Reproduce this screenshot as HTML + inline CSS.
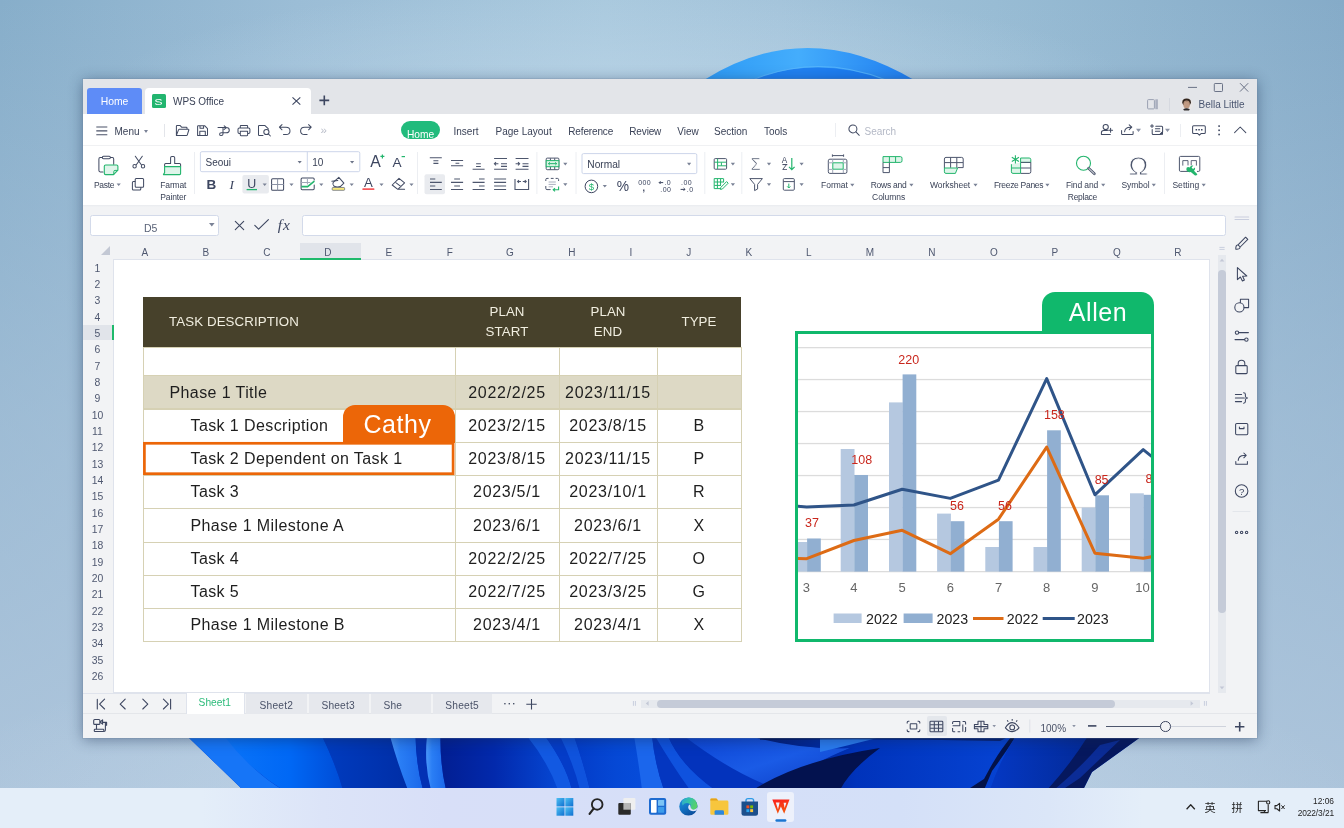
<!DOCTYPE html>
<html>
<head>
<meta charset="utf-8">
<title>WPS Office</title>
<style>
*{box-sizing:border-box;margin:0;padding:0}
html,body{width:1344px;height:828px;overflow:hidden}
body{position:relative;font-family:"Liberation Sans","Noto Sans CJK SC",sans-serif;color:#3c4459;
background:
 radial-gradient(ellipse 720px 170px at 640px 800px,rgba(208,224,240,.6) 0%,rgba(208,224,240,0) 100%),
 radial-gradient(ellipse 520px 110px at 620px 95px,rgba(188,214,232,.7) 0%,rgba(188,214,232,0) 100%),
 linear-gradient(180deg,rgba(178,200,222,0) 0%,rgba(178,200,222,.52) 50%,rgba(178,200,222,.86) 95%,rgba(178,200,222,.9) 100%),
 linear-gradient(90deg,#87aeca 0%,#9bbdd6 22%,#a8c8dd 45%,#a3c3da 58%,#98bcd4 74%,#85abc8 100%);}
.abs,.a{position:absolute}
svg{position:absolute;overflow:visible}
#bg{left:0;top:0}
#taskbar{position:absolute;left:0;top:788px;width:1344px;height:40px;background:linear-gradient(90deg,#e4eef9 0%,#e4eef9 15%,#dce4f8 24%,#d8dff8 33%,#d6dff8 50%,#d4e0f8 67%,#dbe6f8 78%,#e4eef9 85%,#e4eef9 100%);}
#win{position:absolute;left:83px;top:79px;width:1174px;height:659px;background:#fff;box-shadow:0 0 0 1px rgba(110,130,160,.22),0 2px 13px rgba(20,40,75,.45);overflow:hidden}
#titlebar{position:absolute;left:83px;top:79px;width:1174px;height:35px;background:#e3e5e9}
#menubar{position:absolute;left:83px;top:114px;width:1174px;height:31px;background:#fff}
#ribbon{position:absolute;left:83px;top:145px;width:1174px;height:60px;background:#fff;border-top:1px solid #f0f1f3}
#fbar{position:absolute;left:83px;top:205px;width:1174px;height:533px;background:#f2f3f5}
#sheet{position:absolute;left:113px;top:259px;width:1097px;height:434px;background:#fff;border:1px solid #dfe3ec}
#status{position:absolute;left:83px;top:713px;width:1174px;height:25px;border-top:1px solid #e4e6ea}
.t{position:absolute;white-space:nowrap;line-height:1}
/* table (page coords inside #pg) */
#pg{position:absolute;left:-83px;top:-79px;width:1344px;height:828px;will-change:transform}
.cell{position:absolute;border:1px solid #d6d1b4;background:#fff}
.tx{position:absolute;white-space:nowrap;font-size:16px;letter-spacing:.4px;color:#1e1e1e;line-height:20px;height:20px}
.ctr{text-align:center}
.hd{color:#f1eee0;font-size:13.3px;letter-spacing:.1px;line-height:20px}
.colh{position:absolute;top:245px;height:16px;line-height:16px;font-size:10px;color:#4f5870;width:40px;margin-left:-20px;text-align:center}
.rowh{position:absolute;left:83.5px;width:28px;text-align:center;font-size:10.4px;line-height:12px;color:#4f5870}
.ui{position:absolute;white-space:nowrap;font-size:10px;line-height:12px;color:#3a4257}
.ic{stroke:#414a62;fill:none;stroke-width:1.02;stroke-linecap:round;stroke-linejoin:round}
.lab{position:absolute;white-space:nowrap;font-size:8.5px;line-height:11px;color:#3a4257;text-align:center}
.car{position:absolute;width:0;height:0;border-left:2.5px solid transparent;border-right:2.5px solid transparent;border-top:3px solid #7a8296}
</style>
</head>
<body>
<svg id="bg" width="1344" height="828" viewBox="0 0 1344 828">
<defs>
<linearGradient id="bt" x1="0" y1="0" x2="1" y2="0"><stop offset="0" stop-color="#2d9af5"/><stop offset=".45" stop-color="#44adfc"/><stop offset="1" stop-color="#1f7df0"/></linearGradient>
<linearGradient id="b1" x1="0" y1="0" x2="1" y2="0"><stop offset="0" stop-color="#2173f0"/><stop offset="1" stop-color="#0f55e4"/></linearGradient>
<linearGradient id="b2" x1="0" y1="0" x2="1" y2="0"><stop offset="0" stop-color="#0e50e0"/><stop offset="1" stop-color="#0a3cc8"/></linearGradient>
<linearGradient id="b3" x1="0" y1="0" x2="1" y2="1"><stop offset="0" stop-color="#0c3cc8"/><stop offset="1" stop-color="#061f86"/></linearGradient>
<linearGradient id="vg" x1="0" y1="0" x2="0" y2="1"><stop offset="0" stop-color="#fff" stop-opacity="0"/><stop offset=".5" stop-color="#fff" stop-opacity="0"/><stop offset="1" stop-color="#dfe9f6" stop-opacity=".42"/></linearGradient>
<linearGradient id="p2" x1="0" y1="0" x2="1" y2="0"><stop offset="0" stop-color="#0a74f9"/><stop offset=".55" stop-color="#0068f5"/><stop offset="1" stop-color="#004cd6"/></linearGradient>
<linearGradient id="p3" x1="0" y1="0" x2="1" y2="0"><stop offset="0" stop-color="#003cc0"/><stop offset="1" stop-color="#002ea6"/></linearGradient>
<linearGradient id="p4" x1="0" y1="0" x2="1" y2="0"><stop offset="0" stop-color="#4a97fa"/><stop offset=".3" stop-color="#2a7ef5"/><stop offset="1" stop-color="#1b68ea"/></linearGradient>
<linearGradient id="p5" x1="0" y1="0" x2="1" y2="0"><stop offset="0" stop-color="#021e92"/><stop offset=".45" stop-color="#0229ac"/><stop offset="1" stop-color="#0648d4"/></linearGradient>
<linearGradient id="p6" x1="0" y1="0" x2="1" y2="0"><stop offset="0" stop-color="#033cc8"/><stop offset=".6" stop-color="#0548d5"/><stop offset="1" stop-color="#064cda"/></linearGradient>
<linearGradient id="p7" x1="0" y1="0" x2="1" y2="1"><stop offset="0" stop-color="#0c44d4"/><stop offset=".5" stop-color="#1a5be6"/><stop offset="1" stop-color="#0a38c0"/></linearGradient>
<linearGradient id="p8" x1="0" y1="0" x2="1" y2="0"><stop offset="0" stop-color="#02176a"/><stop offset=".4" stop-color="#0033bb"/><stop offset="1" stop-color="#0644d4"/></linearGradient>
<linearGradient id="p9" x1="0" y1="0" x2="1" y2="0"><stop offset="0" stop-color="#0438c4"/><stop offset="1" stop-color="#032a98"/></linearGradient>
</defs>
<path d="M704 80 Q806 16 914 80 Z" fill="url(#bt)"/>
<path d="M750 80 Q818 55 884 80 Z" fill="#1673ee" opacity=".75"/>
<path d="M752 80 Q818 53 886 80" fill="none" stroke="#5ab8fc" stroke-width="1.2" opacity=".8"/>
<!-- bottom bloom -->
<g>
<path d="M187 736H1142L1092 772L1083 790H243Z" fill="#0438c8"/>
<path d="M187 736H226Q250 770 283 790H243Z" fill="#1675f7"/>
<path d="M224 736H322Q336 765 343 790H283Q250 770 224 736Z" fill="url(#p2)"/>
<path d="M322 736H390L408 790H343Q336 765 322 736Z" fill="url(#p3)"/>
<path d="M390 736H415.5Q416 765 423 790H408Q398 765 390 736Z" fill="url(#p4)"/>
<path d="M415.5 736H427Q424 765 431 790H423Q416 765 415.5 736Z" fill="#0330b4"/>
<path d="M427 736H440.5Q440 765 446 790H431Q424 765 427 736Z" fill="url(#p4)"/>
<path d="M440.5 736H530Q548 762 560 790H446Q440 765 440.5 736Z" fill="url(#p5)"/>
<path d="M527 736H545Q566 765 572 790H558Q548 762 527 736Z" fill="#1259e2"/>
<path d="M545 736H560Q574 765 580 790H572Q566 765 545 736Z" fill="#043cc8"/>
<path d="M560 736H574Q584 765 590 790H580Q574 765 560 736Z" fill="#0f53dd"/>
<path d="M574 736H636Q640 765 644 790H590Q584 765 574 736Z" fill="url(#p6)"/>
<path d="M634 736H652Q655 765 664 790H642Q639 765 634 736Z" fill="#1b66ec"/>
<path d="M652 736H684Q700 770 690 790H664Q655 765 652 736Z" fill="#0436c0"/>
<path d="M655 736Q672 765 690 790H715Q680 765 668 736Z" fill="#0f52de"/>
<path d="M668 736H690Q740 775 790 790H715Q680 765 668 736Z" fill="#0333bc"/>
<path d="M684 736H760Q800 750 850 748Q800 770 780 790Q735 775 684 736Z" fill="url(#p7)"/>
<path d="M750 736H1016Q1000 760 990 790H780Q800 768 850 748Q800 750 750 736Z" fill="url(#p8)"/>
<path d="M753 790Q800 760 880 748Q850 770 840 790Z" fill="#03124f"/>
<path d="M820 736H885Q850 745 820 752Z" fill="#2a7cf0"/>
<path d="M760 736H1010L1000 741Q880 738 760 740Z" fill="#05144f" opacity=".7"/>
<path d="M1016 736Q1004 755 992 771L984 790H967L984 779L990 768Q1000 750 1012 736Z" fill="#031248"/>
<path d="M1016 736H1090Q1070 765 1048 790H990Q1000 760 1016 736Z" fill="url(#p9)"/>
<path d="M1088 736H1142L1092 772L1083 790H1047Q1070 765 1088 736Z" fill="#06185e"/>
<path d="M1100 745L1120 740L1080 778L1062 790H1054Q1080 768 1100 745Z" fill="#0b2c96"/>
</g>
</svg>
<div id="taskbar"></div>
<div class="a" style="left:767px;top:792px;width:27px;height:30px;border-radius:3px;background:#edf1fb"></div>
<svg style="left:540px;top:786px" width="270" height="42" viewBox="0 0 270 42">
<defs><linearGradient id="wg" x1="0" y1="0" x2="1" y2="1"><stop offset="0" stop-color="#4fc0f3"/><stop offset="1" stop-color="#0e6fd0"/></linearGradient>
<linearGradient id="wr" x1="0" y1="0" x2=".3" y2="1"><stop offset="0" stop-color="#fb1d1d"/><stop offset="1" stop-color="#f4560e"/></linearGradient><linearGradient id="eg" x1="0" y1="0" x2=".6" y2="1"><stop offset="0" stop-color="#2196dc"/><stop offset=".55" stop-color="#1273c4"/><stop offset="1" stop-color="#0c4f9c"/></linearGradient><linearGradient id="eg2" x1="0" y1="0" x2="1" y2=".4"><stop offset="0" stop-color="#2aa5d6"/><stop offset=".5" stop-color="#35c3a8"/><stop offset="1" stop-color="#58d06a"/></linearGradient></defs>
<g fill="url(#wg)"><rect x="16.5" y="12" width="8" height="8.4"/><rect x="25.3" y="12" width="8" height="8.4"/><rect x="16.5" y="21.3" width="8" height="8.4"/><rect x="25.3" y="21.3" width="8" height="8.4"/></g>
<circle cx="57.2" cy="18.4" r="5.3" fill="none" stroke="#252525" stroke-width="1.9"/><path d="M53.6 22.6L49.6 27.8" stroke="#252525" stroke-width="2.2" stroke-linecap="round"/>
<rect x="83.4" y="12" width="12" height="11.7" rx="1.2" fill="#efefef"/><rect x="78.3" y="17" width="12.5" height="11.7" rx="1" fill="#2a2a2a"/><rect x="83.4" y="17" width="7.4" height="6.7" fill="#b5b5b5"/>
<rect x="109" y="12" width="17.2" height="16.7" rx="2" fill="#1d6bd0"/><rect x="111" y="14" width="5.6" height="12.7" rx=".6" fill="#fff"/><rect x="118" y="14" width="6.2" height="5.8" rx=".6" fill="#7cc4f5"/><rect x="118" y="21" width="6.2" height="5.7" rx=".6" fill="#3c9cea"/>
<circle cx="148.4" cy="20.5" r="9.1" fill="url(#eg)"/>
<path d="M142.2 14.2Q145.4 11.2 149.6 11.5Q156.6 12.4 157.4 19.6Q157.2 23.4 153.2 24Q150.4 23.6 151 21.4Q151.4 18.2 148.4 17.2Q144.6 16.6 142.6 19.4Q141.4 16.6 142.2 14.2Z" fill="url(#eg2)"/>
<path d="M149.4 18.4Q147.2 20.6 149 23.6Q151.8 26.4 156.6 24.6L157.4 21.6Q155.4 24 152.6 23.6Q150.2 22.8 150.6 20.6Q150.6 19 149.4 18.4Z" fill="#dde4f8"/>
<path d="M170.3 14Q170.3 12.6 171.6 12.6H176.4L178.2 14.6H187Q188.4 14.6 188.4 16V27.4Q188.4 28.7 187 28.7H171.6Q170.3 28.7 170.3 27.4Z" fill="#f7c63d"/><path d="M170.3 14Q170.3 12.6 171.6 12.6H176.4L178.2 14.6H170.3Z" fill="#e3a21a"/><path d="M174.6 28.7V25.6Q174.6 24.2 176 24.2H182.6Q184 24.2 184 25.6V28.7Z" fill="#2b87df"/>
<path d="M206 17V14.6Q206 12.6 208 12.6H211.6Q213.6 12.6 213.6 14.6V17" fill="none" stroke="#2f9be6" stroke-width="1.4"/><path d="M201.5 15.6H218V27.2Q218 29.7 215.5 29.7H204Q201.5 29.7 201.5 27.2Z" fill="#1c4f8c"/>
<rect x="206.4" y="19.4" width="2.9" height="2.9" fill="#f25022"/><rect x="210.2" y="19.4" width="2.9" height="2.9" fill="#7fba00"/><rect x="206.4" y="23.2" width="2.9" height="2.9" fill="#2aa4ef"/><rect x="210.2" y="23.2" width="2.9" height="2.9" fill="#ffc83d"/>
<path d="M232.3 13.4H249.5L244.2 27.8L240.9 20.6L237.8 27.8Z" fill="url(#wr)"/><path d="M235.8 16.6H239.6L238 23.6Z M243.6 16.8H246.4L244.6 22Z" fill="#f1f3fb"/>
<rect x="235.4" y="33.2" width="11" height="2.5" rx="1.25" fill="#1a76d2"/>
</svg>
<svg style="left:1170px;top:786px;will-change:transform" width="174" height="42" viewBox="0 0 174 42"><g fill="none" stroke="#252525" stroke-width="1.1" stroke-linejoin="round">
<path d="M16.6 23.2L20.7 18.8L24.8 23.2" stroke-width="1.3"/>
<path d="M97 15.2H88.4V24.6H96M90.4 26.6H98.4M94.4 24.6V26.6M98.2 18.6V26.4"/><circle cx="98.2" cy="16.4" r="1.6"/>
<path d="M105 19.6H106.8L109.6 17.4V25L106.8 22.8H105Z"/><path d="M111.4 19.4L114.6 23M114.6 19.4L111.4 23" stroke-width="1"/>
</g>
<text x="34.4" y="25.6" font-size="11.2" fill="#1e1e1e" font-family="Noto Sans CJK SC, sans-serif">英</text>
<text x="61.4" y="25.6" font-size="11.2" fill="#1e1e1e" font-family="Noto Sans CJK SC, sans-serif">拼</text>
<text x="164" y="17.6" font-size="8.4" fill="#1e1e1e" text-anchor="end" font-family="Liberation Sans, sans-serif">12:06</text>
<text x="164" y="30.4" font-size="8.4" fill="#1e1e1e" text-anchor="end" font-family="Liberation Sans, sans-serif" letter-spacing="-.1">2022/3/21</text>
</svg>
<div id="win"><div id="pg">
<div id="titlebar"></div>
<div id="menubar"></div>
<div id="ribbon"></div>
<div id="fbar"></div>
<div id="sheet"></div>
<div id="status"></div>
<!-- title bar -->
<div class="a" style="left:87px;top:88px;width:55px;height:26px;background:#5e8cf7;border-radius:3px 3px 0 0"></div>
<div class="ui" style="left:87px;width:55px;text-align:center;top:96.2px;color:#fff;font-size:10.4px">Home</div>
<div class="a" style="left:145px;top:88px;width:166px;height:26px;background:#fff;border-radius:4px 4px 0 0"></div>
<div class="a" style="left:152px;top:94px;width:14px;height:14px;background:#22b56f;border-radius:1.5px"></div>
<svg style="left:152px;top:94px" width="14" height="14" viewBox="0 0 14 14"><text x="6.4" y="10.6" font-size="9.8" text-anchor="middle" fill="#fff" font-family="Liberation Sans, sans-serif" transform="translate(6.4 0) scale(1.28 1) translate(-6.4 0)">S</text></svg>
<div class="ui" style="left:173px;top:96.2px;font-size:10px;letter-spacing:-.05px">WPS Office</div>
<svg style="left:292px;top:97px" width="9" height="8" viewBox="0 0 9 8"><path d="M.5 .3L8.3 7.6M8.3 .3L.5 7.6" stroke="#3d4660" stroke-width="1.1" fill="none"/></svg>
<svg style="left:319px;top:95px" width="11" height="11" viewBox="0 0 11 11"><path d="M5.3 .5V10.3M.4 5.4H10.2" stroke="#3d4660" stroke-width="1.6" fill="none"/></svg>
<!-- window controls -->
<svg style="left:1186px;top:82px" width="66" height="12" viewBox="0 0 66 12"><g stroke="#6b7387" stroke-width="1" fill="none"><path d="M2 5.4H11"/><rect x="28.3" y="1.5" width="8.2" height="8" rx=".8"/><path d="M54 1.2L62.2 9.6M62.2 1.2L54 9.6"/></g></svg>
<svg style="left:1147px;top:99px" width="12" height="11" viewBox="0 0 12 11"><rect x=".6" y=".6" width="6.8" height="9.3" rx=".8" fill="none" stroke="#9aa1b2" stroke-width="1"/><rect x="8.3" y=".3" width="2.6" height="9.9" fill="#aab0bf"/></svg>
<div class="a" style="left:1168.5px;top:98px;width:1px;height:13px;background:#d6d9e0"></div>
<!-- avatar -->
<svg style="left:1180px;top:98px" width="13" height="13" viewBox="0 0 13 13"><circle cx="6.5" cy="6.5" r="6.3" fill="#e9e6e6"/><ellipse cx="6.6" cy="4.2" rx="4.3" ry="3.6" fill="#33261e"/><ellipse cx="6.6" cy="6.5" rx="3.3" ry="4" fill="#c19a82"/><path d="M3.2 11.2Q6.5 9.2 9.8 11.2L9 12.6H4Z" fill="#2c2a2c"/><path d="M3.4 5Q6.5 1.8 9.8 5Q8 3.6 6.5 3.8Q5 3.6 3.4 5Z" fill="#33261e"/></svg>
<div class="ui" style="left:1198.5px;top:98.5px;color:#4a5570">Bella Little</div>
<!-- menu bar -->
<svg style="left:96px;top:125.5px" width="12" height="10" viewBox="0 0 12 10"><path d="M.3 1H11.3M.3 4.9H11.3M.3 8.8H11.3" stroke="#4a5268" stroke-width="1.1" fill="none"/></svg>
<div class="ui" style="left:114.5px;top:125.5px">Menu</div>
<div class="car" style="left:143.5px;top:129.5px"></div>
<div class="a" style="left:164px;top:124px;width:1px;height:13px;background:#e3e5ea"></div>
<svg style="left:170px;top:118px" width="170" height="24" viewBox="0 0 170 24"><g class="ic">
<path d="M6.4 17.2V8.3Q6.4 7.6 7.1 7.6H10.2L11.6 9.2H16.3Q17 9.2 17 9.9V11.2M6.4 17.4L8.5 11.9Q8.7 11.3 9.4 11.3H18.3Q19 11.3 18.8 12L17.3 16.8Q17.1 17.5 16.4 17.5H6.6"/>
<path d="M27.6 17.5V8.3Q27.6 7.7 28.2 7.7H34.6L37.5 10.6V17Q37.5 17.6 36.9 17.6H27.8M29.8 17.4V13.2H35.3V17.4M30 7.9V10.3H33.6V7.9"/>
<path d="M48 9.6H56.2Q59.3 9.6 59.3 12.2Q59.3 14.8 56.2 14.8H53M54.2 7.8L56.4 9.6L54.2 11.4M53 10V16Q53 17.6 51.3 17.6Q49.6 17.6 49.6 16.2Q49.6 14.8 51.3 14.8H53"/>
<path d="M70.3 10V8.2Q70.3 7.6 70.9 7.6H77Q77.6 7.6 77.6 8.2V10M70.3 15.6H69.3Q68 15.6 68 14.3V11.3Q68 10 69.3 10H78.6Q79.9 10 79.9 11.3V14.3Q79.9 15.6 78.6 15.6H77.6M70.3 13.3H77.6V17.1Q77.6 17.7 77 17.7H70.9Q70.3 17.7 70.3 17.1Z"/>
<path d="M93 17.5H89.2Q88.5 17.5 88.5 16.8V8.3Q88.5 7.6 89.2 7.6H95L98.2 10.6V11.3"/><circle cx="96.4" cy="14" r="2.6"/><path d="M98.3 15.9L100.4 18"/>
<path d="M112 6.6L109.4 9.2L112 11.8M109.6 9.2H116Q120 9.2 120 13Q120 16.6 116 16.6H113.5"/>
<path d="M138.6 6.6L141.2 9.2L138.6 11.8M141 9.2H134.6Q130.6 9.2 130.6 13Q130.6 16.6 134.6 16.6H137.1"/>
</g><text x="150.6" y="15.6" font-size="11.5" fill="#b9bdc9" font-family="Liberation Sans, sans-serif">»</text></svg>
<!-- tabs -->
<div class="a" style="left:401px;top:121px;width:39px;height:18px;border-radius:9px;background:#21bb7c;overflow:hidden"><div class="ui" style="left:0;width:39px;text-align:center;top:7.7px;color:#fff;font-size:10.2px">Home</div></div>
<div class="ui" style="left:453.5px;top:125.5px">Insert</div>
<div class="ui" style="left:495.5px;top:125.5px">Page Layout</div>
<div class="ui" style="left:568.3px;top:125.5px;letter-spacing:-.15px">Reference</div>
<div class="ui" style="left:629.3px;top:125.5px;letter-spacing:-.15px">Review</div>
<div class="ui" style="left:677.3px;top:125.5px">View</div>
<div class="ui" style="left:714px;top:125.5px">Section</div>
<div class="ui" style="left:764px;top:125.5px">Tools</div>
<div class="a" style="left:834.5px;top:123px;width:1px;height:14px;background:#eceef2"></div>
<svg style="left:847px;top:123px" width="14" height="14" viewBox="0 0 14 14"><circle cx="5.9" cy="5.9" r="4" class="ic"/><path d="M8.9 8.9L12.3 12.3" class="ic" stroke-width="1.3"/></svg>
<div class="ui" style="left:864.5px;top:125.5px;color:#b4b9c6">Search</div>
<svg style="left:1095px;top:118px" width="160" height="24" viewBox="0 0 160 24"><g class="ic">
<circle cx="10.7" cy="9" r="2.6"/><path d="M6.4 16.3V14.8Q6.4 12.6 8.6 12.6H12.5M6.6 16.5H15.3M15.6 10.3V14.3M13.6 12.3H17.6"/>
<path d="M26.6 12.6V15.8Q26.6 16.6 27.4 16.6H37.3Q38.1 16.6 38.1 15.8V13.6M29.6 13.8Q30 9.2 35.4 9.2H36.4M34.2 6.8L36.8 9.2L34.2 11.6"/>
<path d="M57 6.4V9.4M55.5 7.9H58.5M60.8 8.2H66.6Q67.6 8.2 67.6 9.2V13.8L65 16.4H58.2Q57.2 16.4 57.2 15.4V11.4M60.4 10.8H64.8M60.4 13.3H64.8"/>
<path d="M65.2 16.3L67.5 14V16.3Z" fill="#3d4660"/>
<path d="M98.6 7.8H109.3Q110.3 7.8 110.3 8.8V14.6Q110.3 15.6 109.3 15.6H106L104.4 17.2L102.8 15.6H98.6Q97.6 15.6 97.6 14.6V8.8Q97.6 7.8 98.6 7.8Z"/>
<path d="M139.6 14.6L145.2 9L150.8 14.6"/>
</g>
<g fill="#3d4660"><rect x="100.6" y="11" width="1.5" height="1.5"/><rect x="103.3" y="11" width="1.5" height="1.5"/><rect x="106" y="11" width="1.5" height="1.5"/>
<rect x="123.3" y="7.3" width="1.6" height="1.6"/><rect x="123.3" y="11.5" width="1.6" height="1.6"/><rect x="123.3" y="15.7" width="1.6" height="1.6"/></g>
<path d="M41 10.8H46L43.5 14Z M70 10.8H75L72.5 14Z" fill="#8c93a5"/>
</svg>
<div class="a" style="left:1180px;top:123.5px;width:1px;height:13px;background:#eceef2"></div>
<!-- ribbon left: clipboard + font -->
<svg style="left:85px;top:148px" width="340" height="58" viewBox="0 0 340 58">
<g class="ic">
<path d="M17.3 9.6H15.2Q13.9 9.6 13.9 10.9V22.6Q13.9 23.9 15.2 23.9H18M25.4 9.6H27.4Q28.7 9.6 28.7 10.9V16.2"/>
<rect x="17.3" y="8.3" width="8.1" height="2.5" rx="1.2"/>
<path d="M50.3 8.2L56.3 16.8M57.3 8.2L51.3 16.8"/><circle cx="49.6" cy="18.2" r="1.7"/><circle cx="58" cy="18.2" r="1.7"/>
<rect x="50.2" y="30.6" width="8.4" height="8.6" rx="1"/><path d="M50 33.4H48.4Q47.4 33.4 47.4 34.4V41Q47.4 42 48.4 42H54.8Q55.8 42 55.8 41V39.4"/>
<path d="M85.6 15.6V9.8Q85.6 8.5 86.9 8.5H88.4Q89.7 8.5 89.7 9.8V15.6H94.6Q95.6 15.6 95.6 16.6V18.6M79.6 18.6V16.6Q79.6 15.6 80.6 15.6H85.6"/>
</g>
<path d="M20.6 17H31.6Q32.9 17 32.9 18.3V22.2L28.6 26.6H20.6Q19.3 26.6 19.3 25.3V18.3Q19.3 17 20.6 17Z" fill="#dff5ea" stroke="#23b56d" stroke-width="1.1" stroke-linejoin="round"/>
<path d="M32.8 22.4H30Q28.8 22.4 28.8 23.6V26.4" fill="none" stroke="#23b56d" stroke-width="1"/>
<path d="M79.6 18.6H95.6V25.6Q95.6 26.6 94.6 26.6H78.4L79.6 24.6Z" fill="#dff5ea" stroke="#23b56d" stroke-width="1.1" stroke-linejoin="round"/>
<!-- font boxes -->
<rect x="115.4" y="3.7" width="159.4" height="20" rx="1.5" fill="#fff" stroke="#cdd6ea" stroke-width="1"/>
<path d="M222.3 3.7V23.7" stroke="#cdd6ea" stroke-width="1"/>
<path d="M212.6 13H216.8L214.7 15.6Z M265 13H269.2L267.1 15.6Z" fill="#6d7589"/>
<!-- U highlight -->
<rect x="157.4" y="27" width="26.5" height="18.4" rx="2" fill="#e9ebef"/>
<g class="ic">
<rect x="186.6" y="30.8" width="12" height="11.4" rx="1"/><path d="M192.6 31V42M186.8 36.5H198.4" stroke="#8d94a6"/>
<path d="M229.2 37V40.6Q229.2 41.7 228.1 41.7H217.2Q216.1 41.7 216.1 40.6V31.2Q216.1 30.1 217.2 30.1H228.1Q229.2 30.1 229.2 31.2V32"/><path d="M216.3 34.4H225M222.4 30.3V36" stroke="#a0a7b8"/>
<path d="M253.8 29.4L258.9 35.2L255.3 38.6Q252 39.8 248.8 38Q247.2 36.2 248.2 34.4Z"/><path d="M246.8 33.2L252.8 32.4"/>
<path d="M314 30.3L319.6 34.8L312.8 41.3L307.2 37Z M310.2 34.2L316 38.6M312.8 41.3H319.6"/>
</g>
<path d="M216.4 38.6H222.6L229.4 33.2" fill="none" stroke="#23b56d" stroke-width="1.6"/>
<path d="M161.6 41.6H172" stroke="#23b56d" stroke-width="1.3"/>
<rect x="247.2" y="39.5" width="12.4" height="2.8" rx=".7" fill="#f8ea7c" stroke="#5a6070" stroke-width=".7"/>
<rect x="277.4" y="40.3" width="12" height="1.7" rx=".5" fill="#f4595c"/>
<g fill="#7a8296"><path d="M177.6 35.4H181.8L179.7 38Z M204.4 35.4H208.6L206.5 38Z M234.2 35.4H238.4L236.3 38Z M264.6 35.4H268.8L266.7 38Z M294.4 35.4H298.6L296.5 38Z M324.4 35.4H328.6L326.5 38Z M31.6 35.4H35.8L33.7 38Z"/></g>
<!-- A+ A- -->
<path d="M297.4 6.4V10.4M295.4 8.4H299.4" stroke="#23b56d" stroke-width="1.2"/><path d="M316.6 8.6H320" stroke="#23b56d" stroke-width="1.2"/>
<g font-family="Liberation Sans, sans-serif" fill="#3d4660" text-anchor="middle"><text x="166.8" y="39.6" font-size="12.4">U</text><text x="283.5" y="39.1" font-size="13.2">A</text><text x="290.4" y="19.3" font-size="15.8">A</text><text x="312" y="19.3" font-size="13.6">A</text></g>
<path d="M109.5 4V46M332.5 4V46" stroke="#eceef2" stroke-width="1"/>
</svg>
<div class="lab" style="left:93.9px;top:179.6px;letter-spacing:-.3px">Paste</div>
<div class="lab" style="left:160.3px;top:179.6px;letter-spacing:-.15px">Farmat</div>
<div class="lab" style="left:160.3px;top:192.2px;letter-spacing:-.15px">Painter</div>
<div class="ui" style="left:205.5px;top:157px;font-size:10px">Seoui</div>
<div class="ui" style="left:312.2px;top:157px;font-size:10px">10</div>
<div class="ui" style="left:206.5px;top:176.5px;font-size:13.5px;line-height:16px;font-weight:bold;color:#3d4660">B</div>
<div class="ui" style="left:229.5px;top:176.5px;font-size:13.5px;line-height:16px;font-style:italic;font-family:'Liberation Serif',serif;color:#3d4660">I</div>
<!-- ribbon mid: alignment + number -->
<svg style="left:415px;top:148px" width="400" height="58" viewBox="0 0 400 58">
<rect x="167" y="5.6" width="114.8" height="20" rx="1.5" fill="#fff" stroke="#cdd6ea" stroke-width="1"/>
<rect x="9.5" y="26.2" width="20.5" height="20" rx="2" fill="#e9ebef"/>
<g stroke="#4d566d" stroke-width="1.1" fill="none">
<path d="M14.8 9.7H26.8M18.4 12.7H23.4M18.4 15.4H23.4"/>
<path d="M36 12.5H48.1M40.5 15.3H44.3M36 17.7H48.1"/>
<path d="M61.1 15.7H65.8M61.1 18.5H65.8M57.6 21.3H69.6"/>
<path d="M79.1 10.5H92M86 15.8H92M86 18.4H92M79.1 21.3H92M79.4 15.8H83.4M81 14.2L79.4 15.8L81 17.4"/>
<path d="M100.6 10.5H113.5M107.5 15.8H113.5M107.5 18.4H113.5M100.6 21.3H113.5M100.6 15.8H104.6M103 14.2L104.6 15.8L103 17.4"/>
<path d="M15 31H20.3M15 34.4H26.8M15 38H20.3M15 41.5H26.8"/>
<path d="M39.2 31H45M36 34.4H48.1M39.2 38H45M36 41.5H48.1"/>
<path d="M64 31H69.6M57.6 34.4H69.6M64 38H69.6M57.6 41.5H69.6"/>
<path d="M79.1 31H91.1M79.1 34.4H91.1M79.1 38H91.1M79.1 41.5H91.1"/>
<path d="M100 31V42M113.6 31V42M100.4 41.5H113.4M102.6 33.5H106M104 32.2L102.6 33.5L104 34.8M107.8 33.5H111.2M109.8 32.2L111.2 33.5L109.8 34.8"/>
</g>
<path d="M121.9 4V46M161 4V46M289.8 4V46M326.8 4V46" stroke="#eceef2" stroke-width="1"/>
<!-- merge -->
<g fill="none" stroke-width="1"><rect x="131.2" y="10.1" width="12.7" height="11.6" rx="1" stroke="#4d566d"/><path d="M135.4 10.3V12.6M139.7 10.3V12.6M135.4 18.8V21.5M139.7 18.8V21.5" stroke="#4d566d"/><rect x="131.2" y="12.6" width="12.7" height="6.1" fill="#d9f4e5" stroke="#23b56d"/><path d="M133.4 15.65H141.7M134.8 14.3L133.4 15.65L134.8 17M140.3 14.3L141.7 15.65L140.3 17" stroke="#23b56d"/></g>
<g fill="none" stroke="#4d566d" stroke-width="1"><path d="M133.6 30.4H132Q130.8 30.4 130.8 31.6V33M140.6 30.4H142.4Q143.6 30.4 143.6 31.6V33M130.8 38V40.4Q130.8 41.6 132 41.6H135.6M135.8 30.4H138.6" /><path d="M133.6 34H140.8M133.6 36.4H140.8M133.6 38.8H138" stroke="#aab0bf"/></g>
<path d="M138 41.8H143.6V38.6M140 40.2L138.2 41.8L140 43.4" fill="none" stroke="#23b56d" stroke-width="1.1"/>
<g fill="#7a8296"><path d="M148.2 14.8H152.4L150.3 17.4Z M148.2 35.3H152.4L150.3 37.9Z M272 14.8H276.2L274.1 17.4Z M187.7 37H191.9L189.8 39.6Z M315.8 14.8H320L317.9 17.4Z M315.8 35.3H320L317.9 37.9Z M351.9 14.8H356.1L354 17.4Z M351.9 35.3H356.1L354 37.9Z M384.5 14.8H388.7L386.6 17.4Z M384.5 35.3H388.7L386.6 37.9Z"/></g>
<!-- Normal box -->
<circle cx="176.4" cy="38.4" r="6.3" fill="none" stroke="#3d4660" stroke-width="1"/>
<text x="176.4" y="42" font-size="9.5" text-anchor="middle" fill="#23b56d" font-family="Liberation Sans, sans-serif">$</text>
<text x="207.9" y="43.3" font-size="13.8" text-anchor="middle" fill="#3d4660" font-family="Liberation Sans, sans-serif">%</text>
<g font-family="Liberation Sans, sans-serif" font-size="7" fill="#3d4660"><text x="223.2" y="37.2" letter-spacing=".4">000</text>
<text x="249.4" y="37.2" letter-spacing=".5">.0</text><text x="245.2" y="44" letter-spacing=".5">.00</text><text x="266" y="37.2" letter-spacing=".5">.00</text><text x="271.8" y="44" letter-spacing=".5">.0</text></g>
<text x="227.6" y="42.6" font-size="9" font-weight="bold" fill="#3d4660" font-family="Liberation Sans, sans-serif">,</text>
<g stroke="#3d4660" stroke-width="1" fill="none"><path d="M244.2 34.6H248.2M245.6 33.2L244.2 34.6L245.6 36"/><path d="M265.6 41.4H270M268.6 40L270 41.4L268.6 42.8"/></g>
<!-- cond format / table format -->
<g fill="none" stroke-width="1"><rect x="299.2" y="10.6" width="12.4" height="10.6" rx="1" stroke="#4d566d"/><path d="M302.6 10.8V21M299.4 14.2H311.4M306.4 14.4V17.8H311.4M302.8 17.8H306.4" stroke="#23b56d"/></g>
<g fill="none" stroke-width="1"><path d="M308.4 30.6H299.2V40.6H305.6M299.4 34H308.4M299.4 37.4H306M302.4 30.8V40.4M305.6 30.8V37.4M308.6 30.6V34.4" stroke="#23b56d"/><path d="M311.6 33.6L313.2 35.2L307.4 41L305.4 41.4L305.8 39.4Z" stroke="#23b56d"/></g>
<!-- sigma, funnel -->
<g fill="none" stroke="#4d566d" stroke-width="1" stroke-linejoin="round"><path d="M334.8 30.6H347.4L342.6 36.4V41L339.6 42.6V36.4Z"/></g>
<text x="340.7" y="21.6" font-size="16" text-anchor="middle" fill="#4d566d" stroke="#fff" stroke-width=".5" font-family="Liberation Sans, sans-serif">Σ</text>
<!-- AZ sort -->
<g font-family="Liberation Sans, sans-serif" font-size="8.2" fill="#3d4660"><text x="366.8" y="15.4">A</text><text x="367.2" y="22.2">Z</text></g>
<path d="M376.8 10V21.6M374 18.8L376.8 21.6L379.6 18.8" fill="none" stroke="#23b56d" stroke-width="1.2"/>
<path d="M367.4 16.6H372.4" stroke="#3d4660" stroke-width=".8"/>
<g fill="none" stroke="#4d566d" stroke-width="1"><rect x="368.3" y="30.6" width="11" height="11.6" rx="1"/><path d="M368.4 33.6H379.2"/><path d="M373.8 35.6V39.8M372.2 38.4L373.8 40L375.4 38.4" stroke="#23b56d"/></g>
</svg>
<div class="ui" style="left:587.3px;top:158.8px;font-size:10.2px">Normal</div>
<!-- ribbon right: big buttons -->
<svg style="left:810px;top:148px" width="430" height="58" viewBox="0 0 430 58">
<g fill="none" stroke-width="1" stroke-linejoin="round">
<!-- format -->
<rect x="22.8" y="14.8" width="10.4" height="6.4" fill="#dff5ea" stroke="#23b56d"/>
<path d="M22.4 7.6H33.6M22.4 6.4V8.8M33.6 6.4V8.8" stroke="#4d566d"/>
<rect x="18.3" y="11.2" width="18.6" height="14.2" rx="1.6" stroke="#4d566d"/>
<path d="M18.5 14.8H22.6M33.4 14.8H36.7M18.5 21.4H22.6M33.4 21.4H36.7M22.7 11.4V14.6M33.3 11.4V14.6M22.7 21.5V25.2M33.3 21.5V25.2" stroke="#a0a7b8"/>
<!-- rows and columns -->
<path d="M73 8.6H90.4Q92 8.6 92 10.2V12.8Q92 14.4 90.4 14.4H73Z" fill="#dff5ea" stroke="#23b56d"/>
<path d="M79.4 8.8V14.2M85.6 8.8V14.2" stroke="#23b56d"/>
<path d="M73 14.4V24.6H79.4V14.4M73 19.6H79.4" stroke="#4d566d"/>
<!-- worksheet -->
<path d="M134.4 20V11Q134.4 9.4 136 9.4H151.6Q153.2 9.4 153.2 11V19.6H147.6M134.6 14.6H153M140.6 9.6V19.8M146.8 9.6V19.8" stroke="#4d566d"/>
<path d="M134.4 20H147.6L145.4 25.4H136Q134.4 25.4 134.4 23.8Z" fill="#dff5ea" stroke="#23b56d"/>
<!-- freeze panes -->
<path d="M210.6 14.4V25.4H203Q201.4 25.4 201.4 23.8V16.2M201.6 20H210.6" fill="#dff5ea" stroke="#23b56d"/>
<path d="M210.6 10H219.2Q220.8 10 220.8 11.6V14.4H210.6Z" fill="#dff5ea" stroke="#23b56d"/>
<path d="M210.8 14.4H220.8V23.8Q220.8 25.4 219.2 25.4H210.8M210.8 20H220.6" stroke="#4d566d"/>
<path d="M205.4 7.2V15.6M201.8 9.3L209 13.5M209 9.3L201.8 13.5" stroke="#23b56d" stroke-width="1.1"/>
<!-- find -->
<circle cx="273.5" cy="15.2" r="7" stroke="#23b56d" stroke-width="1.1"/>
<path d="M278.6 20.2L284.4 25.8" stroke="#4d566d" stroke-width="2.6" stroke-linecap="round"/><path d="M278.8 20.4L284.2 25.6" stroke="#fff" stroke-width="1" stroke-linecap="round"/>
<!-- omega -->
<!-- setting -->
<path d="M380 23.4H370.6Q369.4 23.4 369.4 22.2V9.6Q369.4 8.4 370.6 8.4H388.6Q389.8 8.4 389.8 9.6V22.2Q389.8 23.4 388.6 23.4H387" stroke="#4d566d"/>
<path d="M372.8 17.6V12.6H378V17.4M381.2 17.4V12.6H386.4V17.6" stroke="#4d566d" stroke-width=".9"/>
</g>
<path d="M376.8 19.6Q378 18.4 379.6 19.4Q381 17 383.4 17.6L381.6 19.6L383 21L385 19.4Q385.6 21.4 384 22.8L387.4 26.2Q386.8 27.8 385 27.6L380.8 24Q378 24.6 376.6 22.6Q376 21 376.8 19.6Z" fill="#23b56d"/>
<text x="328.3" y="26.8" font-size="26.5" text-anchor="middle" fill="#4d566d" stroke="#fff" stroke-width=".9" font-family="Liberation Sans, sans-serif">Ω</text>
<path d="M354.5 4.5V46" stroke="#eceef2" stroke-width="1"/>
<g fill="#7a8296"><path d="M40.2 35.8H44.4L42.3 38.4Z M99.3 35.8H103.5L101.4 38.4Z M163.4 35.8H167.6L165.5 38.4Z M235.3 35.8H239.5L237.4 38.4Z M291.1 35.8H295.3L293.2 38.4Z M341.7 35.8H345.9L343.8 38.4Z M391.6 35.8H395.8L393.7 38.4Z"/></g>
</svg>
<div class="lab" style="left:821px;top:179.6px;letter-spacing:0px">Format</div>
<div class="lab" style="left:870.7px;top:179.6px;letter-spacing:-0.25px">Rows and</div>
<div class="lab" style="left:872.1px;top:192.3px;letter-spacing:-0.08px">Columns</div>
<div class="lab" style="left:930px;top:179.6px;letter-spacing:-0.03px">Worksheet</div>
<div class="lab" style="left:993.9px;top:179.6px;letter-spacing:-0.3px">Freeze Panes</div>
<div class="lab" style="left:1066px;top:179.6px;letter-spacing:-0.12px">Find and</div>
<div class="lab" style="left:1067.8px;top:192.4px;letter-spacing:-0.28px">Replace</div>
<div class="lab" style="left:1121.5px;top:179.6px;letter-spacing:-0.05px">Symbol</div>
<div class="lab" style="left:1172.4px;top:179.6px;letter-spacing:0.05px">Setting</div>
<!-- formula bar -->
<div class="a" style="left:83px;top:205px;width:1174px;height:2px;background:linear-gradient(#e9ebef,#f2f3f5)"></div>
<div class="a" style="left:90px;top:215px;width:129px;height:21px;background:#fff;border:1px solid #d3daea;border-radius:2.5px"></div>
<div class="ui" style="left:144px;top:221.8px;font-size:10.5px;color:#5a6378">D5</div>
<svg style="left:208.5px;top:223px" width="6" height="4" viewBox="0 0 6 4"><path d="M0 0H5.6L2.8 3.6Z" fill="#7a8296"/></svg>
<svg style="left:230px;top:214px" width="70" height="22" viewBox="0 0 70 22"><g fill="none" stroke="#3d4660" stroke-width="1.1" stroke-linecap="round" stroke-linejoin="round"><path d="M5.3 7.4L13.7 15.6M13.7 7.4L5.3 15.6"/><path d="M24.8 11.4L28.6 15.2L38.4 5.6"/></g><text x="47.8" y="16" font-size="15.5" font-style="italic" fill="#3d4660" font-family="Liberation Serif, serif" letter-spacing=".9">fx</text></svg>
<div class="a" style="left:301.5px;top:215px;width:924.5px;height:21px;background:#fff;border:1px solid #d3daea;border-radius:2.5px"></div>
<div class="a" style="left:300px;top:243px;width:61px;height:16.5px;background:#e1e4ea;border-bottom:2px solid #1fb96b"></div>
<div class="colh" style="left:144.8px">A</div>
<div class="colh" style="left:205.8px">B</div>
<div class="colh" style="left:266.8px">C</div>
<div class="colh" style="left:327.8px">D</div>
<div class="colh" style="left:388.8px">E</div>
<div class="colh" style="left:449.8px">F</div>
<div class="colh" style="left:509.8px">G</div>
<div class="colh" style="left:571.8px">H</div>
<div class="colh" style="left:630.8px">I</div>
<div class="colh" style="left:688.8px">J</div>
<div class="colh" style="left:748.8px">K</div>
<div class="colh" style="left:808.8px">L</div>
<div class="colh" style="left:869.8px">M</div>
<div class="colh" style="left:931.8px">N</div>
<div class="colh" style="left:993.8px">O</div>
<div class="colh" style="left:1054.8px">P</div>
<div class="colh" style="left:1116.8px">Q</div>
<div class="colh" style="left:1177.8px">R</div>
<svg style="left:101px;top:246px" width="9" height="9"><path d="M9 0V9H0Z" fill="#c3c8d4"/></svg>
<div class="a" style="left:83px;top:325px;width:31px;height:15px;background:#e1e4ea;border-right:2px solid #1fb96b"></div>
<div class="rowh" style="top:262.7px">1</div>
<div class="rowh" style="top:279.0px">2</div>
<div class="rowh" style="top:295.4px">3</div>
<div class="rowh" style="top:311.7px">4</div>
<div class="rowh" style="top:328.0px">5</div>
<div class="rowh" style="top:344.3px">6</div>
<div class="rowh" style="top:360.7px">7</div>
<div class="rowh" style="top:377.0px">8</div>
<div class="rowh" style="top:393.3px">9</div>
<div class="rowh" style="top:409.7px">10</div>
<div class="rowh" style="top:426.0px">11</div>
<div class="rowh" style="top:442.3px">12</div>
<div class="rowh" style="top:458.7px">13</div>
<div class="rowh" style="top:475.0px">14</div>
<div class="rowh" style="top:491.3px">15</div>
<div class="rowh" style="top:507.6px">16</div>
<div class="rowh" style="top:524.0px">17</div>
<div class="rowh" style="top:540.3px">18</div>
<div class="rowh" style="top:556.6px">19</div>
<div class="rowh" style="top:573.0px">20</div>
<div class="rowh" style="top:589.3px">21</div>
<div class="rowh" style="top:605.6px">22</div>
<div class="rowh" style="top:622.0px">23</div>
<div class="rowh" style="top:638.3px">34</div>
<div class="rowh" style="top:654.6px">35</div>
<div class="rowh" style="top:670.9px">26</div>
<div class="a" style="left:143px;top:297px;width:598px;height:50px;background:#47412b"></div>
<div class="cell" style="left:143px;top:346.5px;width:313px;height:29.8px;background:#fff"></div>
<div class="cell" style="left:455px;top:346.5px;width:105px;height:29.8px;background:#fff"></div>
<div class="cell" style="left:559px;top:346.5px;width:99px;height:29.8px;background:#fff"></div>
<div class="cell" style="left:657px;top:346.5px;width:85px;height:29.8px;background:#fff"></div>
<div class="cell" style="left:143px;top:375.3px;width:313px;height:34.2px;background:#ddd9c5"></div>
<div class="cell" style="left:455px;top:375.3px;width:105px;height:34.2px;background:#ddd9c5"></div>
<div class="cell" style="left:559px;top:375.3px;width:99px;height:34.2px;background:#ddd9c5"></div>
<div class="cell" style="left:657px;top:375.3px;width:85px;height:34.2px;background:#ddd9c5"></div>
<div class="cell" style="left:143px;top:408.5px;width:313px;height:34.3px;background:#fff"></div>
<div class="cell" style="left:455px;top:408.5px;width:105px;height:34.3px;background:#fff"></div>
<div class="cell" style="left:559px;top:408.5px;width:99px;height:34.3px;background:#fff"></div>
<div class="cell" style="left:657px;top:408.5px;width:85px;height:34.3px;background:#fff"></div>
<div class="cell" style="left:143px;top:441.8px;width:313px;height:34.2px;background:#fff"></div>
<div class="cell" style="left:455px;top:441.8px;width:105px;height:34.2px;background:#fff"></div>
<div class="cell" style="left:559px;top:441.8px;width:99px;height:34.2px;background:#fff"></div>
<div class="cell" style="left:657px;top:441.8px;width:85px;height:34.2px;background:#fff"></div>
<div class="cell" style="left:143px;top:475.0px;width:313px;height:34.3px;background:#fff"></div>
<div class="cell" style="left:455px;top:475.0px;width:105px;height:34.3px;background:#fff"></div>
<div class="cell" style="left:559px;top:475.0px;width:99px;height:34.3px;background:#fff"></div>
<div class="cell" style="left:657px;top:475.0px;width:85px;height:34.3px;background:#fff"></div>
<div class="cell" style="left:143px;top:508.3px;width:313px;height:34.3px;background:#fff"></div>
<div class="cell" style="left:455px;top:508.3px;width:105px;height:34.3px;background:#fff"></div>
<div class="cell" style="left:559px;top:508.3px;width:99px;height:34.3px;background:#fff"></div>
<div class="cell" style="left:657px;top:508.3px;width:85px;height:34.3px;background:#fff"></div>
<div class="cell" style="left:143px;top:541.6px;width:313px;height:34.4px;background:#fff"></div>
<div class="cell" style="left:455px;top:541.6px;width:105px;height:34.4px;background:#fff"></div>
<div class="cell" style="left:559px;top:541.6px;width:99px;height:34.4px;background:#fff"></div>
<div class="cell" style="left:657px;top:541.6px;width:85px;height:34.4px;background:#fff"></div>
<div class="cell" style="left:143px;top:575.0px;width:313px;height:34.3px;background:#fff"></div>
<div class="cell" style="left:455px;top:575.0px;width:105px;height:34.3px;background:#fff"></div>
<div class="cell" style="left:559px;top:575.0px;width:99px;height:34.3px;background:#fff"></div>
<div class="cell" style="left:657px;top:575.0px;width:85px;height:34.3px;background:#fff"></div>
<div class="cell" style="left:143px;top:608.3px;width:313px;height:33.7px;background:#fff"></div>
<div class="cell" style="left:455px;top:608.3px;width:105px;height:33.7px;background:#fff"></div>
<div class="cell" style="left:559px;top:608.3px;width:99px;height:33.7px;background:#fff"></div>
<div class="cell" style="left:657px;top:608.3px;width:85px;height:33.7px;background:#fff"></div>
<div class="tx hd" style="left:169px;top:312.0px;">TASK DESCRIPTION</div>
<div class="tx hd ctr" style="left:455px;width:104px;top:302.0px;">PLAN</div>
<div class="tx hd ctr" style="left:455px;width:104px;top:322.0px;">START</div>
<div class="tx hd ctr" style="left:559px;width:98px;top:302.0px;">PLAN</div>
<div class="tx hd ctr" style="left:559px;width:98px;top:322.0px;">END</div>
<div class="tx hd ctr" style="left:657px;width:84px;top:312.0px;">TYPE</div>
<div class="tx" style="left:169.5px;top:382.7px;">Phase 1 Title</div>
<div class="tx ctr" style="left:455px;width:104px;top:382.7px;letter-spacing:.7px">2022/2/25</div>
<div class="tx ctr" style="left:559px;width:98px;top:382.7px;letter-spacing:.7px">2023/11/15</div>
<div class="tx ctr" style="left:657px;width:84px;top:382.7px;"></div>
<div class="tx" style="left:190.5px;top:415.9px;">Task 1 Description</div>
<div class="tx ctr" style="left:455px;width:104px;top:415.9px;letter-spacing:.7px">2023/2/15</div>
<div class="tx ctr" style="left:559px;width:98px;top:415.9px;letter-spacing:.7px">2023/8/15</div>
<div class="tx ctr" style="left:657px;width:84px;top:415.9px;">B</div>
<div class="tx" style="left:190.5px;top:449.2px;">Task 2 Dependent on Task 1</div>
<div class="tx ctr" style="left:455px;width:104px;top:449.2px;letter-spacing:.7px">2023/8/15</div>
<div class="tx ctr" style="left:559px;width:98px;top:449.2px;letter-spacing:.7px">2023/11/15</div>
<div class="tx ctr" style="left:657px;width:84px;top:449.2px;">P</div>
<div class="tx" style="left:190.5px;top:482.4px;">Task 3</div>
<div class="tx ctr" style="left:455px;width:104px;top:482.4px;letter-spacing:.7px">2023/5/1</div>
<div class="tx ctr" style="left:559px;width:98px;top:482.4px;letter-spacing:.7px">2023/10/1</div>
<div class="tx ctr" style="left:657px;width:84px;top:482.4px;">R</div>
<div class="tx" style="left:190.5px;top:515.8px;">Phase 1 Milestone A</div>
<div class="tx ctr" style="left:455px;width:104px;top:515.8px;letter-spacing:.7px">2023/6/1</div>
<div class="tx ctr" style="left:559px;width:98px;top:515.8px;letter-spacing:.7px">2023/6/1</div>
<div class="tx ctr" style="left:657px;width:84px;top:515.8px;">X</div>
<div class="tx" style="left:190.5px;top:549.1px;">Task 4</div>
<div class="tx ctr" style="left:455px;width:104px;top:549.1px;letter-spacing:.7px">2022/2/25</div>
<div class="tx ctr" style="left:559px;width:98px;top:549.1px;letter-spacing:.7px">2022/7/25</div>
<div class="tx ctr" style="left:657px;width:84px;top:549.1px;">O</div>
<div class="tx" style="left:190.5px;top:582.4px;">Task 5</div>
<div class="tx ctr" style="left:455px;width:104px;top:582.4px;letter-spacing:.7px">2022/7/25</div>
<div class="tx ctr" style="left:559px;width:98px;top:582.4px;letter-spacing:.7px">2023/3/25</div>
<div class="tx ctr" style="left:657px;width:84px;top:582.4px;">G</div>
<div class="tx" style="left:190.5px;top:615.4px;">Phase 1 Milestone B</div>
<div class="tx ctr" style="left:455px;width:104px;top:615.4px;letter-spacing:.7px">2023/4/1</div>
<div class="tx ctr" style="left:559px;width:98px;top:615.4px;letter-spacing:.7px">2023/4/1</div>
<div class="tx ctr" style="left:657px;width:84px;top:615.4px;">X</div>
<div class="a" style="left:343px;top:405px;width:111.5px;height:38px;background:#ec6608;border-radius:12px 12px 0 0"></div>
<svg style="left:0;top:0" width="1344" height="828"><rect x="144.4" y="443.3" width="308.7" height="30.4" fill="none" stroke="#ec6608" stroke-width="2.7"/></svg>
<div class="t" style="left:363.5px;top:411.7px;font-size:25px;line-height:25px;letter-spacing:.55px;color:#fff">Cathy</div>
<div class="a" style="left:1042px;top:292px;width:112px;height:42px;background:#10b86c;border-radius:13px 13px 0 0"></div>
<div class="t" style="left:1042px;width:112px;text-align:center;top:300.2px;font-size:25px;line-height:25px;letter-spacing:.6px;color:#fff">Allen</div>
<div class="a" style="left:795px;top:331px;width:359px;height:311px;border:3px solid #10b86c;background:#fff;overflow:hidden">
<svg style="left:-798px;top:-334px" width="1344" height="828" viewBox="0 0 1344 828" font-family="Liberation Sans, sans-serif">
<rect x="796" y="347.0" width="360" height="1.3" fill="#dcdcdc"/>
<rect x="796" y="378.9" width="360" height="1.3" fill="#dcdcdc"/>
<rect x="796" y="410.9" width="360" height="1.3" fill="#dcdcdc"/>
<rect x="796" y="442.9" width="360" height="1.3" fill="#dcdcdc"/>
<rect x="796" y="474.9" width="360" height="1.3" fill="#dcdcdc"/>
<rect x="796" y="506.9" width="360" height="1.3" fill="#dcdcdc"/>
<rect x="796" y="538.8" width="360" height="1.3" fill="#dcdcdc"/>
<rect x="796" y="571.0" width="360" height="1.3" fill="#dcdcdc"/>
<rect x="793.5" y="542" width="13.8" height="29.6" fill="#b5c8e0"/>
<rect x="807.1" y="538.5" width="13.7" height="33.1" fill="#91afd1"/>
<rect x="840.7" y="449" width="13.8" height="122.6" fill="#b5c8e0"/>
<rect x="854.3" y="475" width="13.7" height="96.6" fill="#91afd1"/>
<rect x="889.0" y="402.4" width="13.8" height="169.2" fill="#b5c8e0"/>
<rect x="902.6" y="374.4" width="13.7" height="197.2" fill="#91afd1"/>
<rect x="937.1" y="513.6" width="13.8" height="58.0" fill="#b5c8e0"/>
<rect x="950.7" y="521.2" width="13.7" height="50.4" fill="#91afd1"/>
<rect x="985.3" y="547" width="13.8" height="24.6" fill="#b5c8e0"/>
<rect x="998.9" y="521.2" width="13.7" height="50.4" fill="#91afd1"/>
<rect x="1033.5" y="547" width="13.8" height="24.6" fill="#b5c8e0"/>
<rect x="1047.1" y="430.3" width="13.7" height="141.3" fill="#91afd1"/>
<rect x="1081.7" y="507.5" width="13.8" height="64.1" fill="#b5c8e0"/>
<rect x="1095.3" y="495.3" width="13.7" height="76.3" fill="#91afd1"/>
<rect x="1130.0" y="493.3" width="13.8" height="78.3" fill="#b5c8e0"/>
<rect x="1143.6" y="494.8" width="13.7" height="76.8" fill="#91afd1"/>
<polyline fill="none" stroke="#dd6b15" stroke-width="3" stroke-linejoin="round" points="796,558.5 806.7,558.7 853.9,540.5 902.2,530.3 950.3,553.7 998.5,519.2 1046.7,447.1 1094.9,553.2 1143.2,558.2 1156,556"/>
<polyline fill="none" stroke="#2f5488" stroke-width="3" stroke-linejoin="round" points="796,506 806.7,507 853.9,505 902.2,489.2 950.3,498.4 998.5,480.1 1046.7,378.6 1094.9,494.8 1143.2,449.6 1156,460"/>
<text x="812" y="527" font-size="12.5" fill="#c9271d" text-anchor="middle">37</text>
<text x="861.7" y="464.2" font-size="12.5" fill="#c9271d" text-anchor="middle">108</text>
<text x="908.8" y="363.8" font-size="12.5" fill="#c9271d" text-anchor="middle">220</text>
<text x="957" y="510" font-size="12.5" fill="#c9271d" text-anchor="middle">56</text>
<text x="1005" y="510" font-size="12.5" fill="#c9271d" text-anchor="middle">56</text>
<text x="1054.4" y="418.6" font-size="12.5" fill="#c9271d" text-anchor="middle">158</text>
<text x="1101.6" y="484" font-size="12.5" fill="#c9271d" text-anchor="middle">85</text>
<text x="1152.5" y="483" font-size="12.5" fill="#c9271d" text-anchor="middle">85</text>
<text x="806.3" y="592.3" font-size="13" fill="#666" text-anchor="middle">3</text>
<text x="853.9" y="592.3" font-size="13" fill="#666" text-anchor="middle">4</text>
<text x="902.2" y="592.3" font-size="13" fill="#666" text-anchor="middle">5</text>
<text x="950.3" y="592.3" font-size="13" fill="#666" text-anchor="middle">6</text>
<text x="998.5" y="592.3" font-size="13" fill="#666" text-anchor="middle">7</text>
<text x="1046.7" y="592.3" font-size="13" fill="#666" text-anchor="middle">8</text>
<text x="1094.9" y="592.3" font-size="13" fill="#666" text-anchor="middle">9</text>
<text x="1142.5" y="592.3" font-size="13" fill="#666" text-anchor="middle">10</text>
<rect x="833.6" y="613.5" width="28" height="9.5" fill="#b5c8e0"/>
<text x="866" y="623.7" font-size="14.2" fill="#222">2022</text>
<rect x="903.6" y="613.5" width="29" height="9.5" fill="#91afd1"/>
<text x="936.6" y="623.7" font-size="14.2" fill="#222">2023</text>
<rect x="973" y="617" width="30.5" height="3" fill="#dd6b15"/>
<text x="1006.8" y="623.7" font-size="14.2" fill="#222">2022</text>
<rect x="1042.7" y="617" width="32" height="3" fill="#2f5488"/>
<text x="1077" y="623.7" font-size="14.2" fill="#222">2023</text>
</svg></div>
<!-- scrollbars -->
<div class="a" style="left:1218px;top:255px;width:8px;height:438px;background:#e6e9ee"></div>
<div class="a" style="left:1218px;top:270px;width:8px;height:343px;background:#c5cbd8;border-radius:4px"></div>
<svg style="left:1218px;top:245px" width="8" height="20" viewBox="0 0 8 20"><path d="M1.4 2.4H6.6M1.4 4.4H6.6" stroke="#c9cede" stroke-width="1"/><path d="M1.6 16.6H6.4L4 13.8Z" fill="#c3c8d6"/></svg>
<svg style="left:1218px;top:684px" width="8" height="8" viewBox="0 0 8 8"><path d="M1.6 2.4H6.4L4 5.2Z" fill="#c3c8d6"/></svg>
<div class="a" style="left:641px;top:699.5px;width:558.5px;height:8px;background:#e6e9ee"></div>
<div class="a" style="left:656.5px;top:699.5px;width:458.5px;height:8px;background:#c5cbd8;border-radius:4px"></div>
<svg style="left:630px;top:699px" width="24" height="9" viewBox="0 0 24 9"><path d="M3.4 2V6.8M5.4 2V6.8" stroke="#c9cede" stroke-width="1"/><path d="M18.6 2V6.8L15.8 4.4Z" fill="#c3c8d6"/></svg>
<svg style="left:1186px;top:699px" width="24" height="9" viewBox="0 0 24 9"><path d="M4.6 2V6.8L7.4 4.4Z" fill="#c3c8d6"/><path d="M18.4 2V6.8M20.4 2V6.8" stroke="#c9cede" stroke-width="1"/></svg>
<!-- sheet tabs -->
<div class="a" style="left:83px;top:693px;width:1127px;height:1px;background:#dfe3ec"></div>
<svg style="left:90px;top:696px" width="90" height="16" viewBox="0 0 90 16"><g fill="none" stroke="#3d4660" stroke-width="1.1" stroke-linecap="round" stroke-linejoin="round"><path d="M7.3 3.2V13M14.6 3.2L9.6 8.1L14.6 13"/><path d="M35.2 3.2L30.2 8.1L35.2 13"/><path d="M52.8 3.2L57.8 8.1L52.8 13"/><path d="M73.4 3.2L78.4 8.1L73.4 13M80.6 3.2V13"/></g></svg>
<div class="a" style="left:185.5px;top:693px;width:59px;height:20.5px;background:#fff;border-left:1px solid #dfe3ec;border-right:1px solid #dfe3ec"></div>
<div class="ui" style="left:198.6px;top:696.9px;color:#2cbb7a;font-size:10.2px">Sheet1</div>
<div class="a" style="left:245.5px;top:694px;width:61px;height:19.5px;background:#e6e8ed"></div>
<div class="a" style="left:308.5px;top:694px;width:60px;height:19.5px;background:#e6e8ed"></div>
<div class="a" style="left:370.5px;top:694px;width:60px;height:19.5px;background:#e6e8ed"></div>
<div class="a" style="left:432.5px;top:694px;width:59.5px;height:19.5px;background:#e6e8ed"></div>
<div class="ui" style="left:259.6px;top:699.5px;font-size:10.2px;color:#4a5268;letter-spacing:.2px">Sheet2</div>
<div class="ui" style="left:321.4px;top:699.5px;font-size:10.2px;color:#4a5268;letter-spacing:.2px">Sheet3</div>
<div class="ui" style="left:383.4px;top:699.5px;font-size:10.2px;color:#4a5268;letter-spacing:.2px">She</div>
<div class="ui" style="left:445.3px;top:699.5px;font-size:10.2px;color:#4a5268;letter-spacing:.2px">Sheet5</div>
<svg style="left:500px;top:696px" width="40" height="16" viewBox="0 0 40 16"><g fill="#4a5268"><rect x="4.2" y="7" width="1.4" height="1.4"/><rect x="8.6" y="7" width="1.4" height="1.4"/><rect x="13" y="7" width="1.4" height="1.4"/></g><path d="M31.5 3V13.4M26.3 8.2H36.7" stroke="#3d4660" stroke-width="1.1" fill="none"/></svg>
<!-- status bar -->
<svg style="left:92px;top:717px" width="18" height="17" viewBox="0 0 18 17"><g fill="none" stroke="#3d4660" stroke-width="1.1" stroke-linejoin="round"><rect x="1.7" y="2.5" width="6.2" height="4.9" rx="1"/><path d="M8.1 5L10.6 2.9V7.2Z"/><path d="M10.8 5.4H14.6V8.2H13.4M13.4 5.6V13Q13.4 14.5 11.8 14.5M4.5 7.6V12.3"/><rect x="2.3" y="12.3" width="9.5" height="2.2" rx=".6"/></g></svg>
<div class="a" style="left:926.5px;top:716px;width:20.5px;height:20px;background:#e4e7ec;border-radius:2px"></div>
<svg style="left:895px;top:712px" width="240" height="28" viewBox="0 0 240 28"><g fill="none" stroke="#3d4660" stroke-width="1.05" stroke-linejoin="round">
<path d="M12.2 11.4V10.2Q12.2 9.2 13.2 9.2H14.4M22.6 9.2H23.8Q24.8 9.2 24.8 10.2V11.4M24.8 17.4V18.6Q24.8 19.6 23.8 19.6H22.6M14.4 19.6H13.2Q12.2 19.6 12.2 18.6V17.4"/><rect x="15.2" y="11.8" width="6.6" height="5.2" rx=".6"/>
<rect x="35" y="9.2" width="12.8" height="10.6" rx=".8"/><path d="M35.2 12.8H47.6M35.2 16.3H47.6M39.3 9.4V19.6M43.5 9.4V19.6"/>
<path d="M57.6 12V10.4Q57.6 9.4 58.6 9.4H64.8V13.8H57.6M67.6 9.4H69.6Q70.6 9.4 70.6 10.4V12.4M67.8 12.6V19.8M57.6 16V18.8Q57.6 19.8 58.6 19.8H60.2M62.6 19.8H65.2M70.6 15V18.8Q70.6 19.8 69.6 19.8"/>
<path d="M83 9.2H89V12.4H92.8V16.8H89V19.8H83V16.8H79.4V12.4H83ZM86 9.4V19.6M79.6 14.6H92.6"/>
<path d="M110.4 15.8Q113.6 10.6 117.2 10.6Q120.8 10.6 124 15.8Q120.8 19.6 117.2 19.6Q113.6 19.6 110.4 15.8Z"/><circle cx="117.2" cy="15.4" r="2.4"/><path d="M117.2 7V8.8M112.2 8.2L113.2 9.8M122.2 8.2L121.2 9.8"/>
</g>
<path d="M134.8 7.5V20.5" stroke="#dfe2e8" stroke-width="1"/>
<path d="M97.4 13H101L99.2 15.3Z M177.2 13H180.8L179 15.3Z" fill="#8c93a5"/>
<path d="M193 13.9H201.4" stroke="#3d4660" stroke-width="1.6"/>
<path d="M211 14.5H270" stroke="#4d566d" stroke-width="1"/>
</svg>
<div class="ui" style="left:1040.5px;top:722.6px;font-size:10px;color:#4a5268">100%</div>
<div class="a" style="left:1165px;top:726px;width:61px;height:1px;background:#cfd3dc"></div>
<div class="a" style="left:1160px;top:721.2px;width:10.6px;height:10.6px;border:1.1px solid #3d4660;border-radius:50%;background:#f2f3f5"></div>
<svg style="left:1234px;top:721px" width="12" height="12" viewBox="0 0 12 12"><path d="M5.7 1V10.4M1 5.7H10.4" stroke="#3d4660" stroke-width="1.6" fill="none"/></svg>
<!-- side panel -->
<svg style="left:1228px;top:206px" width="28" height="340" viewBox="0 0 28 340"><g fill="none" stroke="#3d4660" stroke-width="1.05" stroke-linejoin="round" stroke-linecap="round">
<path d="M7 10.9H20.7M7 13.5H20.7" stroke="#c9cede"/>
<path d="M17.6 31.2L19.8 33.4L12.2 41L10 38.8ZM10.2 38.8Q7.6 39 7.8 43.2Q11.6 43.6 12.2 41"/>
<path d="M9.4 61.6V73.6L12.4 71L14.4 75L16.4 74L14.6 70.2L18.8 70Z"/>
<circle cx="11.4" cy="101.4" r="4.6"/><path d="M12.4 96.6V93.2H20.6V101.6H16.2"/>
<circle cx="9" cy="126.6" r="1.7"/><path d="M10.8 126.6H20.4"/><circle cx="18.4" cy="133.6" r="1.7"/><path d="M7 133.6H16.6"/>
<rect x="7.8" y="159.6" width="11.4" height="8" rx="1"/><path d="M10.2 159.4V157.4Q10.2 154.2 13.5 154.2Q16.8 154.2 16.8 157.4V159.4"/>
<path d="M7.4 188.4H13.6M7.4 192H16.4M7.4 195.6H13.6M15.6 186.8Q17.4 186.8 17.4 188.4V190.2Q17.4 191.8 19.6 192Q17.4 192.2 17.4 193.8V195.6Q17.4 197.2 15.6 197.2"/>
<rect x="7.6" y="217.4" width="12.2" height="11.4" rx="1.2"/><path d="M11.4 221V222.6H16V221"/>
<path d="M7.8 255.4V258.2H19.4V255.4M10.2 254.4Q10.6 249.4 16 249.4H17.6M15.8 247L18.2 249.4L15.8 251.8"/>
<circle cx="13.6" cy="285" r="6.3"/>
<path d="M5 305.4H22" stroke="#e3e6eb"/><text x="13.6" y="288.6" font-size="9.6" text-anchor="middle" fill="#3d4660" stroke="none" font-family="Liberation Sans, sans-serif">?</text>
<circle cx="8.6" cy="326.4" r="1.2"/><circle cx="13.6" cy="326.4" r="1.2"/><circle cx="18.6" cy="326.4" r="1.2"/>
</g></svg>
</div></div>
</body>
</html>
